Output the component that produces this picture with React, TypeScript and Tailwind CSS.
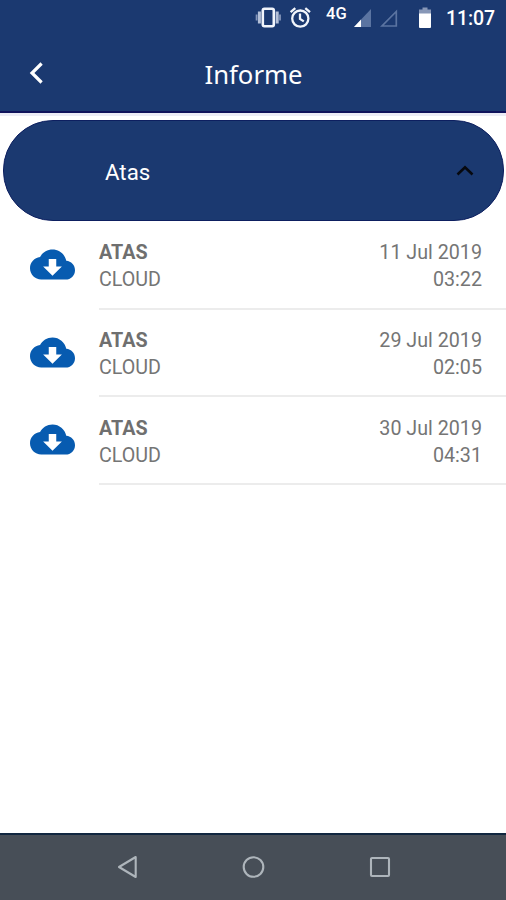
const entries = [
  { date: '11 Jul 2019', time: '03:22' },
  { date: '29 Jul 2019', time: '02:05' },
  { date: '30 Jul 2019', time: '04:31' },
];

function StatusBar() {
  return (
    <div className="flex h-9 items-start text-white">
      <svg className="ml-[255px] mt-1.5 h-[23px] w-[27px] shrink-0" viewBox="0 0 27 23">
        <rect x="7.8" y="2.8" width="11" height="17.4" rx="1.6" fill="none" stroke="#f1f5fb" strokeWidth="2.6" />
        <path d="M4.4 5.5v12M22.2 5.5v12" stroke="#b4c0d8" strokeWidth="3" />
        <path d="M1.6 8.5v6M25 8.5v6" stroke="#8495b9" strokeWidth="1.8" />
      </svg>
      <svg className="ml-1.5 mt-1.5 h-[23px] w-6 shrink-0" viewBox="0 0 24 23" fill="none" stroke="#f1f5fb" strokeWidth="2.3">
        <circle cx="12.3" cy="12.6" r="8.1" />
        <path d="M2.6 6.2 7.3 2.2M22 6.2l-4.7-4M12 7.5v5.4l3.8 2.5" />
      </svg>
      <span className="ml-3.5 mt-[5px] w-[22px] whitespace-nowrap text-[16.5px] font-medium leading-[18px]">4G</span>
      <svg className="ml-1.5 mt-[9px] h-[19px] w-[18px] shrink-0" viewBox="0 0 18 19">
        <path d="M17 0v18H0z" fill="#5b74a1" />
        <path d="M7 10.6V18H0z" fill="#fff" />
      </svg>
      <svg className="ml-2 mt-[9px] h-[19px] w-[18px] shrink-0" viewBox="0 0 18 19">
        <path d="M16.3 2.5V17H2z" fill="none" stroke="#5b74a1" strokeWidth="1.7" />
      </svg>
      <svg className="ml-[21px] mt-[7px] h-[22px] w-3 shrink-0" viewBox="0 0 12 22">
        <path d="M3.5 0.5h5v2H12V7H0V2.5h3.5z" fill="#8797b7" />
        <path d="M0 6.5h12V20a1 1 0 0 1-1 1H1a1 1 0 0 1-1-1z" fill="#fff" />
      </svg>
      <span className="ml-[15px] mt-2 whitespace-nowrap text-[19.5px] font-medium leading-[21px] tracking-[-0.1px]">11:07</span>
    </div>
  );
}

function CloudDownload() {
  return (
    <svg className="h-[45px] w-[45px] shrink-0" viewBox="0 0 24 24" fill="#075bb0">
      <path d="M19.35 10.04C18.67 6.59 15.64 4 12 4 9.11 4 6.6 5.64 5.35 8.04 2.34 8.36 0 10.91 0 14c0 3.31 2.69 6 6 6h13c2.76 0 5-2.24 5-5 0-2.64-2.05-4.78-4.65-4.96zM17 13l-5 5-5-5h3V9h4v4h3z" />
    </svg>
  );
}

export default function App() {
  return (
    <div className="flex h-[900px] w-[506px] flex-col overflow-hidden bg-white font-['Roboto',sans-serif]">
      <header className="h-[113px] shrink-0 border-b-2 border-[#10135c] bg-[#1b3970]">
        <StatusBar />
        <div className="grid h-[73px] grid-cols-[100px_1fr_100px] items-center text-white">
          <svg className="ml-7 h-6 w-[18px]" viewBox="0 0 18 24" fill="none" stroke="#fff" strokeWidth="3.2">
            <path d="M13.6 2.5 4 12l9.6 9.5" />
          </svg>
          <h1 className="pl-px pt-[5px] text-center font-['Noto_Sans',sans-serif] text-[25.7px] leading-8">Informe</h1>
        </div>
      </header>
      <div className="h-[3px] shrink-0 bg-[#ececf6]" />
      <main className="flex-1">
        <button className="ml-[3px] mt-1 flex h-[101px] w-[501px] items-center justify-between rounded-[50px] border border-[#0d1f60] bg-[#1b3970] pl-[101px] pr-[29px] text-white">
          <span className="pt-0.5 text-[22.3px] leading-7">Atas</span>
          <svg className="h-3 w-[18px]" viewBox="0 0 18 12" fill="none" stroke="#07090f" strokeWidth="2.6">
            <path d="M1.5 9.5 9 2.3l7.5 7.2" />
          </svg>
        </button>
        <ul className="pt-px text-[19.7px] leading-[27px] text-[#757575]">
          {entries.map((e) => (
            <li key={e.date} className="flex h-[87.7px] pl-[30px]">
              <div className="w-[69px] shrink-0 pt-5"><CloudDownload /></div>
              <div className="flex flex-1 justify-between border-b-2 border-[#ececec] pr-6 pt-[17.4px]">
                <div>
                  <div className="font-bold text-[#6f6f6f]">ATAS</div>
                  <div>CLOUD</div>
                </div>
                <div className="text-right">
                  <div>{e.date}</div>
                  <div>{e.time}</div>
                </div>
              </div>
            </li>
          ))}
        </ul>
      </main>
      <nav className="flex h-[67px] shrink-0 items-start border-t-2 border-[#112740] bg-[#474e57] pl-[117px] pt-5">
        <svg className="h-6 w-[280px]" viewBox="0 0 280 24" fill="none" stroke="#aeb5bb" strokeWidth="2.1" strokeLinejoin="round">
          <path d="M18.7 2v20L2 12z" />
          <circle cx="136.5" cy="12" r="9.8" />
          <rect x="254" y="3" width="18" height="18" rx="1" />
        </svg>
      </nav>
    </div>
  );
}
